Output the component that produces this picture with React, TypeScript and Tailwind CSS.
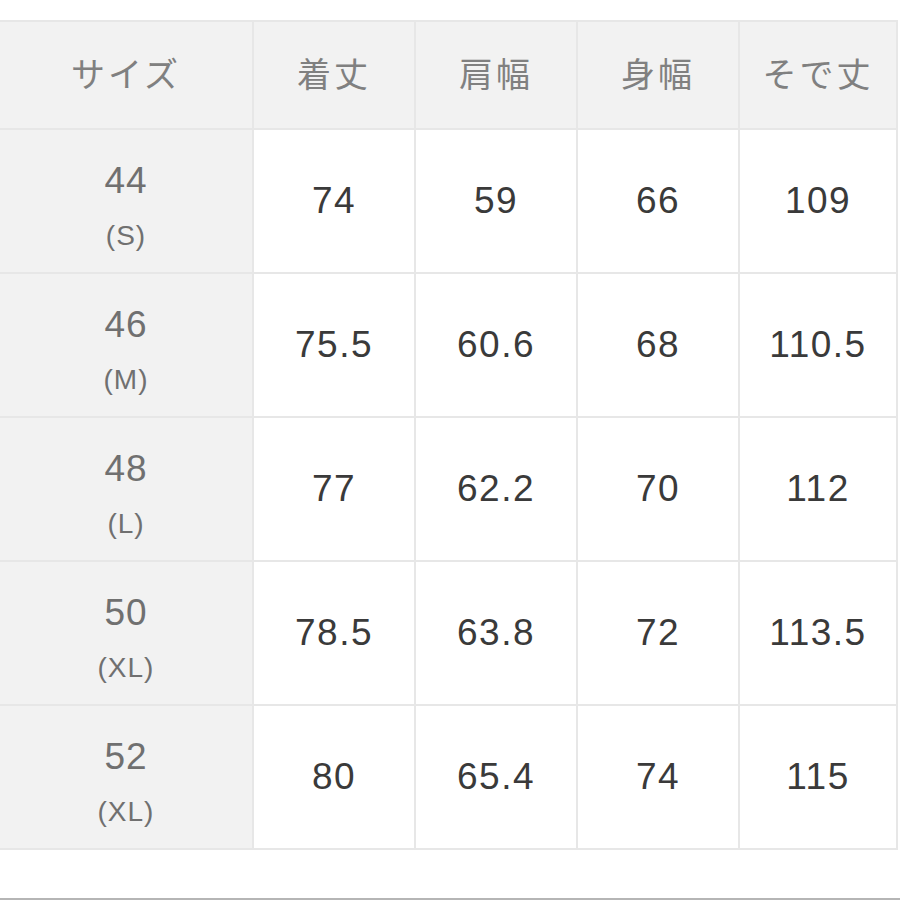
const headers = ["着丈", "肩幅", "身幅", "そで丈"]

const rows = [
  { size: "44", label: "(S)", vals: ["74", "59", "66", "109"] },
  { size: "46", label: "(M)", vals: ["75.5", "60.6", "68", "110.5"] },
  { size: "48", label: "(L)", vals: ["77", "62.2", "70", "112"] },
  { size: "50", label: "(XL)", vals: ["78.5", "63.8", "72", "113.5"] },
  { size: "52", label: "(XL)", vals: ["80", "65.4", "74", "115"] },
]

export default function App() {
  return (
    <div
      className="w-[900px] h-[900px] bg-white flex flex-col border-b-2 border-[#b5b5b5]"
      style={{ fontFamily: '"Liberation Sans", "Noto Sans CJK JP", sans-serif' }}
    >
      <div className="mt-[20px] w-[898px] bg-[#e7e7e7] pt-[2px] pb-[2px] pr-[2px] grid grid-cols-[252px_160px_160px_160px_156px] grid-rows-[106px_142px_142px_142px_142px_142px] gap-[2px]">
        <div className="bg-[#f2f2f2] flex items-center justify-center text-[34px] tracking-[3px] text-[#808080]">サイズ</div>
        {headers.map((h) => (
          <div key={h} className="bg-[#f2f2f2] flex items-center justify-center text-[34px] tracking-[3px] text-[#808080]">
            {h}
          </div>
        ))}
        {rows.map((r) => (
          <>
            <div key={r.size} className="bg-[#f2f2f2] flex flex-col items-center justify-start pt-[29px] text-[#707070]">
              <span className="text-[37px] leading-[44px] tracking-[1px]">{r.size}</span>
              <span className="text-[28px] leading-[34px] tracking-[1px] mt-[16px]">{r.label}</span>
            </div>
            {r.vals.map((v, i) => (
              <div key={r.size + i} className="bg-white flex items-center justify-center text-[37px] tracking-[1.5px] text-[#3a3a3a]">
                {v}
              </div>
            ))}
          </>
        ))}
      </div>
    </div>
  )
}
